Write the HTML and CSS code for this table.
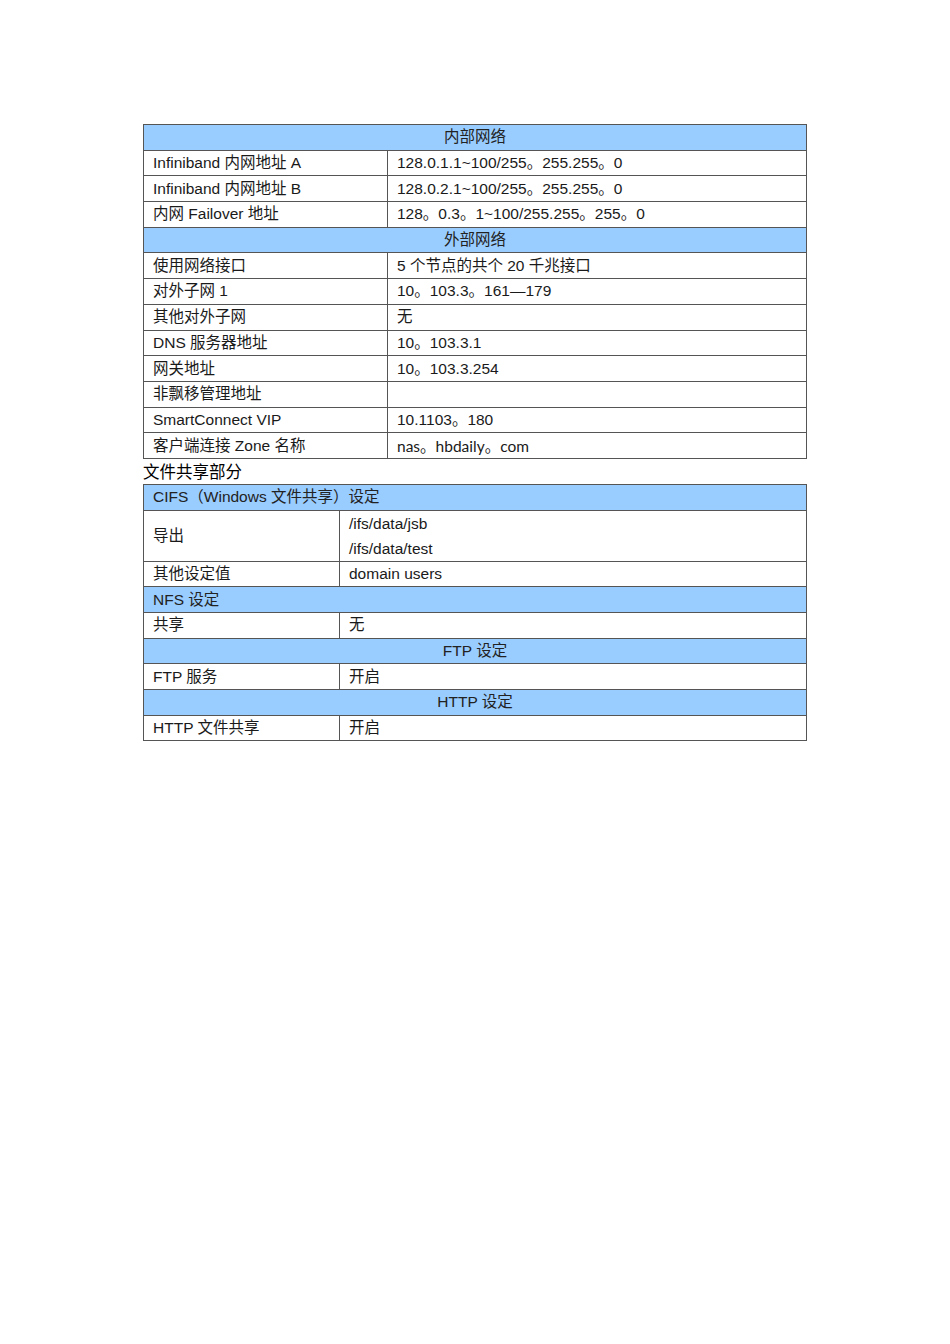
FILE: index.html
```html
<!DOCTYPE html>
<html lang="zh">
<head>
<meta charset="utf-8">
<title>网络设定</title>
<link rel="stylesheet" href="styles.css">
</head>
<body>
<div class="page">
  <table class="grid t1">
    <colgroup><col class="c1a"><col></colgroup>
    <tr class="hd"><td colspan="2" class="center">内部网络</td></tr>
    <tr><td>Infiniband 内网地址 A</td><td>128.0.1.1~100/255。255.255。0</td></tr>
    <tr><td>Infiniband 内网地址 B</td><td>128.0.2.1~100/255。255.255。0</td></tr>
    <tr><td>内网 Failover 地址</td><td>128。0.3。1~100/255.255。255。0</td></tr>
    <tr class="hd"><td colspan="2" class="center">外部网络</td></tr>
    <tr><td>使用网络接口</td><td>5 个节点的共个 20 千兆接口</td></tr>
    <tr><td>对外子网 1</td><td>10。103.3。161—179</td></tr>
    <tr><td>其他对外子网</td><td>无</td></tr>
    <tr><td>DNS 服务器地址</td><td>10。103.3.1</td></tr>
    <tr><td>网关地址</td><td>10。103.3.254</td></tr>
    <tr><td>非飘移管理地址</td><td></td></tr>
    <tr><td>SmartConnect VIP</td><td>10.1103。180</td></tr>
    <tr><td>客户端连接 Zone 名称</td><td class="lato">nas。hbdaily。com</td></tr>
  </table>
  <div class="section-title">文件共享部分</div>
  <table class="grid t2">
    <colgroup><col class="c2a"><col></colgroup>
    <tr class="hd"><td colspan="2">CIFS（Windows 文件共享）设定</td></tr>
    <tr class="double"><td>导出</td><td>/ifs/data/jsb<br>/ifs/data/test</td></tr>
    <tr><td>其他设定值</td><td>domain users</td></tr>
    <tr class="hd"><td colspan="2">NFS 设定</td></tr>
    <tr><td>共享</td><td>无</td></tr>
    <tr class="hd"><td colspan="2" class="center">FTP 设定</td></tr>
    <tr><td>FTP 服务</td><td>开启</td></tr>
    <tr class="hd"><td colspan="2" class="center">HTTP 设定</td></tr>
    <tr><td>HTTP 文件共享</td><td>开启</td></tr>
  </table>
</div>
</body>
</html>
```
FILE: styles.css
```css
html, body {
  margin: 0;
  padding: 0;
  background: #ffffff;
}
body {
  font-family: "Liberation Sans", Arial, "Noto Sans CJK SC", sans-serif;
  font-size: 15.5px;
  color: #1a1a1a;
}
.page {
  padding: 124px 0 0 143px;
}
.grid {
  width: 664px;
  border-collapse: collapse;
  border: 1px solid #222222;
  table-layout: fixed;
}
.grid td {
  border: 1px solid #555555;
  height: 24.7px;
  padding: 0 0 0 9px;
  line-height: 24px;
  vertical-align: middle;
  white-space: nowrap;
}
.grid tr.hd td {
  background: #99ccff;
  color: #222222;
}
.grid td.center {
  text-align: center;
  padding-left: 0;
}
.c1a { width: 244px; }
.c2a { width: 196px; }
.grid tr.double td {
  height: 49.4px;
}
.grid tr.double td + td {
  line-height: 25px;
}
.lato {
  font-family: Lato, "Liberation Sans", "Noto Sans CJK SC", sans-serif;
}
.section-title {
  height: 25px;
  line-height: 26px;
  font-family: "Liberation Sans", "Noto Sans CJK SC", sans-serif;
  font-size: 16.5px;
  color: #000000;
}
```
